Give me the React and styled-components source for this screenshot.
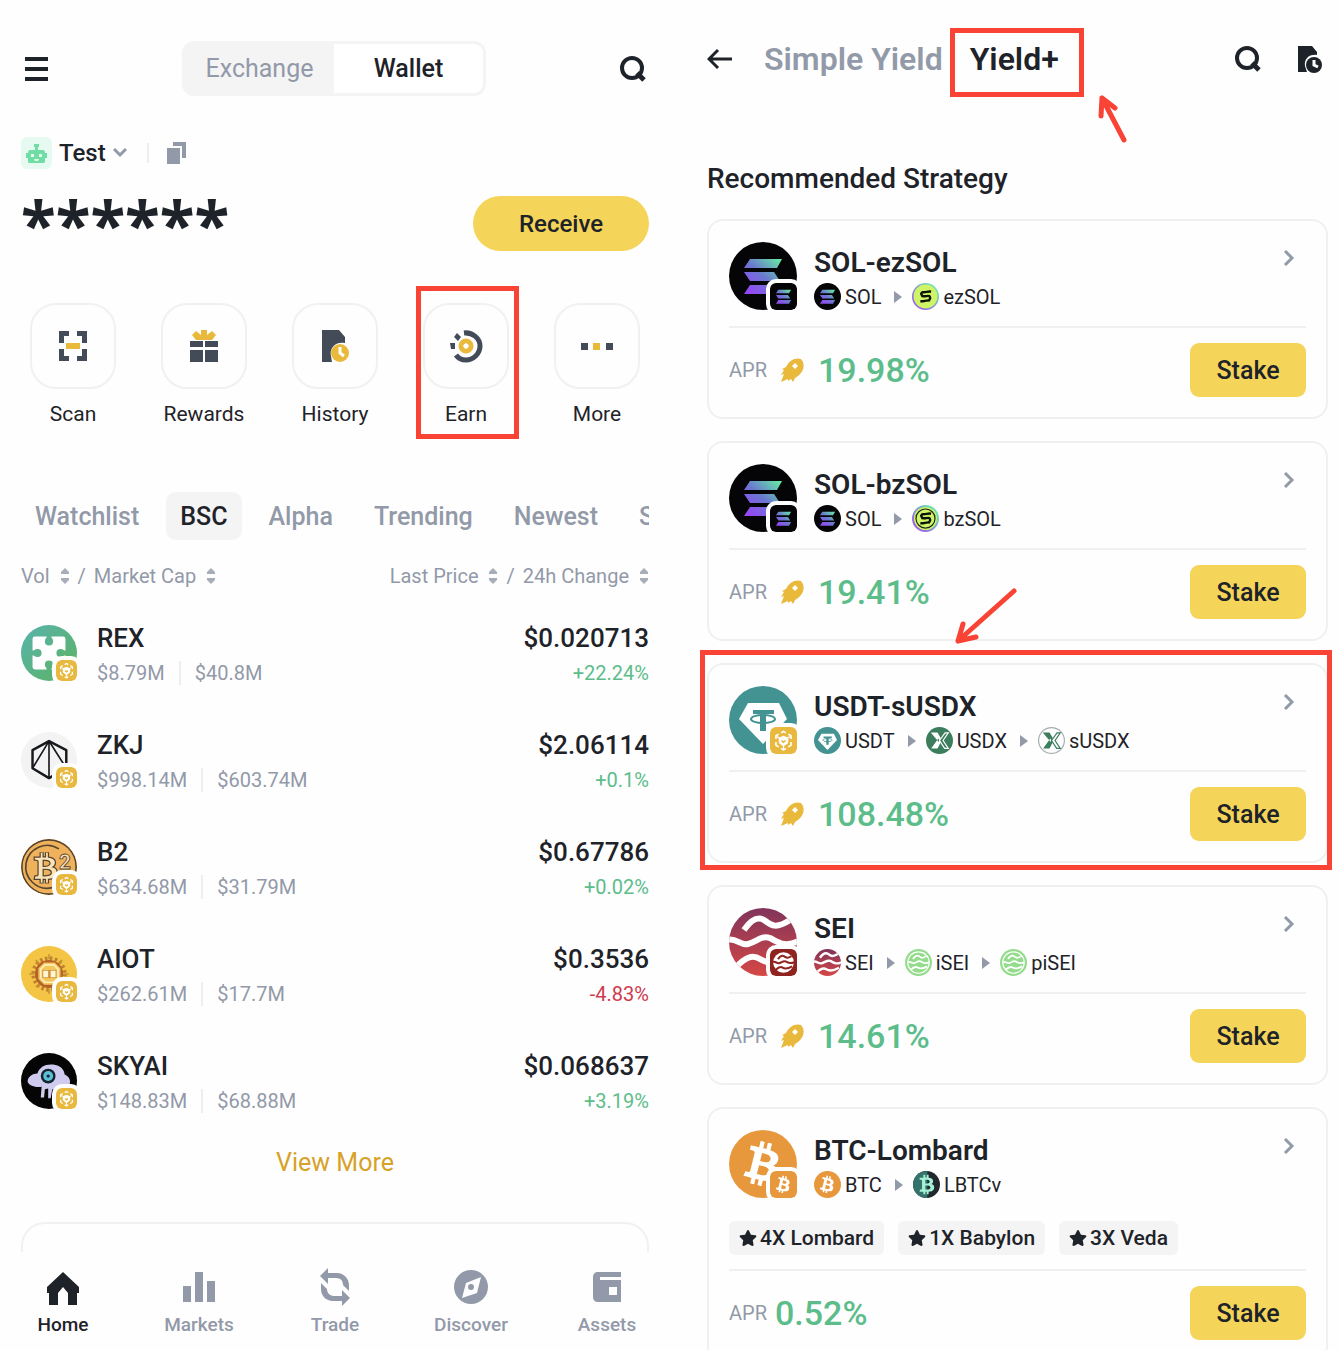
import { useId } from 'react';
import styled, { createGlobalStyle, css } from 'styled-components';
import { FaBtc, FaStar } from 'react-icons/fa';

const GlobalStyle = createGlobalStyle`
  * {
    box-sizing: border-box;
  }

  body {
    margin: 0;
    background: #fefefe;
    color: #1e2329;
    font-family: Roboto, 'Liberation Sans', sans-serif;
  }

  button {
    padding: 0;
    border: 0;
    background: none;
    color: inherit;
    font: inherit;
    cursor: pointer;
  }

  a {
    color: inherit;
    text-decoration: none;
  }

  h1, h2, h3, p, ul, ol {
    margin: 0;
    padding: 0;
    list-style: none;
  }

  svg {
    display: block;
    flex-shrink: 0;
  }
`;

const Page = styled.div`
  display: grid;
  grid-template-columns: 1fr 1fr;
  grid-template-rows: minmax(0, 1fr);
  height: 100vh;
  overflow: hidden;
`;

/* wallet side */

const WalletPanel = styled.main`
  display: flex;
  flex-direction: column;
  min-width: 0;
`;

const WalletBody = styled.div`
  display: flex;
  flex: 1;
  flex-direction: column;
  min-height: 0;
  overflow: hidden;
  padding: 41px 21px 0;
`;

const WalletHeader = styled.header`
  display: flex;
  flex-shrink: 0;
  align-items: center;
  justify-content: space-between;
  padding: 0 2px 0 4px;
`;

const Toggle = styled.div`
  display: flex;
  width: 304px;
  height: 55px;
  padding: 3px;
  border-radius: 12px;
  background: #f4f4f4;
`;

const ToggleButton = styled.button`
  flex: 1;
  border-radius: 0 9px 9px 0;
  background: ${({ $active }) => ($active ? '#fff' : 'transparent')};
  color: ${({ $active }) => ($active ? '#1e2329' : '#9299a8')};
  font-size: 25px;
  font-weight: ${({ $active }) => ($active ? 500 : 400)};
`;

const Account = styled.div`
  display: flex;
  flex-shrink: 0;
  align-items: center;
  height: 32px;
  margin-top: 41px;
`;

const AccountButton = styled.button`
  display: flex;
  align-items: center;
  gap: 7px;
  font-size: 24px;
  font-weight: 500;
`;

const AccountDivider = styled.span`
  width: 2px;
  height: 20px;
  margin: 0 18px 0 20px;
  background: #eceef0;
`;

const BalanceRow = styled.div`
  display: flex;
  flex-shrink: 0;
  align-items: center;
  justify-content: space-between;
  height: 55px;
  margin-top: 27px;
`;

const Balance = styled.p`
  height: 55px;
  font-family: 'Noto Sans', sans-serif;
  font-size: 64px;
  font-weight: 700;
  line-height: 56px;
`;

const ReceiveButton = styled.button`
  width: 176px;
  height: 55px;
  border-radius: 28px;
  background: #f4d55a;
  font-size: 24px;
  font-weight: 500;
`;

const Actions = styled.nav`
  display: flex;
  flex-shrink: 0;
  justify-content: space-between;
  margin-top: 52px;
  padding: 0 9px;
`;

const Action = styled.a`
  position: relative;
  display: flex;
  flex-direction: column;
  align-items: center;
  gap: 11px;
  width: 86px;
  font-size: 21px;
  line-height: 28px;
`;

const ActionTile = styled.span`
  display: flex;
  align-items: center;
  justify-content: center;
  width: 86px;
  height: 86px;
  border: 2px solid #f0f1f1;
  border-radius: 26px;
`;

const Highlight = styled.span`
  position: absolute;
  border: 5px solid #f84335;
  pointer-events: none;
  ${({ $around }) =>
    ({
      action: css`inset: -17px -10px -11px -7px;`,
      tab: css`inset: -12px -25px -19px -20px;`,
      card: css`inset: -15px -6px -9px -9px;`,
    })[$around]}
`;

const Tabs = styled.div`
  display: flex;
  flex-shrink: 0;
  gap: 13px;
  margin-top: 64px;
  overflow: hidden;
`;

const Tab = styled.button`
  flex-shrink: 0;
  height: 48px;
  padding: 0 14px;
  border-radius: 10px;
  background: ${({ $active }) => ($active ? '#f4f4f4' : 'transparent')};
  color: ${({ $active }) => ($active ? '#1e2329' : '#9299a8')};
  font-size: 25px;
  font-weight: 500;
`;

const Market = styled.table`
  flex-shrink: 0;
  width: 100%;
  margin-top: 22px;
  border-collapse: collapse;

  th,
  td {
    padding: 0;
    text-align: left;
  }

  th {
    padding-bottom: 9px;
  }

  th:last-child,
  td:last-child {
    text-align: right;
  }
`;

const SortGroup = styled.span`
  display: inline-flex;
  align-items: center;
  gap: 8px;
  height: 28px;
  color: #9299a8;
  font-size: 20px;
  font-weight: 400;
`;

const SortButton = styled.button`
  display: flex;
  align-items: center;
  gap: 10px;
`;

const MarketRow = styled.tr`
  height: 107px;
`;

const TokenCell = styled.div`
  display: flex;
  align-items: center;
  gap: 20px;
`;

const TokenInfo = styled.div`
  padding-top: 6px;
`;

const TokenName = styled.div`
  font-size: 26px;
  font-weight: 500;
  line-height: 34px;
`;

const TokenStats = styled.div`
  display: flex;
  align-items: center;
  height: 36px;
  color: #9299a8;
  font-size: 20px;

  span + span {
    margin-left: 14px;
    padding-left: 14px;
    border-left: 2px solid #eceef0;
  }
`;

const Change = styled.div`
  color: ${({ $down }) => ($down ? '#cf3a4e' : '#5cbd8b')};
  font-size: 20px;
  line-height: 36px;
`;

const ViewMore = styled.a`
  align-self: center;
  margin-top: 13px;
  color: #d6a228;
  font-size: 25px;
  line-height: 32px;
`;

const NextPanel = styled.section`
  flex: 1;
  margin-top: 43px;
  border: 2px solid #f0f1f1;
  border-bottom: 0;
  border-radius: 24px 24px 0 0;
`;

const BottomNav = styled.nav`
  display: flex;
  flex-shrink: 0;
  justify-content: space-between;
  height: 98px;
  padding: 16px 18px 0;
`;

const NavLink = styled.a`
  display: flex;
  flex-direction: column;
  align-items: center;
  gap: 7px;
  width: 90px;
  color: ${({ $active }) => ($active ? '#1e2329' : '#9299a8')};
  font-size: 19px;
  font-weight: 500;
  line-height: 24px;
`;

/* yield side */

const YieldPanel = styled.section`
  min-width: 0;
  padding: 31px 12px 0 37px;
`;

const YieldHeader = styled.header`
  display: flex;
  align-items: center;
  height: 56px;
`;

const YieldTabs = styled.div`
  display: flex;
  flex: 1;
  gap: 27px;
  margin-left: 31px;
`;

const YieldTab = styled.button`
  position: relative;
  color: ${({ $active }) => ($active ? '#1e2329' : '#9299a8')};
  font-size: 32px;
  font-weight: 600;
  line-height: 38px;
`;

const HeaderTools = styled.div`
  display: flex;
  gap: 34px;
  padding-right: 6px;
`;

const TabArrow = styled.svg`
  position: absolute;
  top: 51px;
  right: -70px;
`;

const CardArrow = styled.svg`
  position: absolute;
  top: -80px;
  left: 242px;
`;

const SectionTitle = styled.h2`
  margin: 75px 0 24px;
  font-size: 28px;
  font-weight: 500;
  line-height: 33px;
`;

const Cards = styled.div`
  display: flex;
  flex-direction: column;
  gap: 22px;
`;

const Card = styled.article`
  position: relative;
  padding: 21px 20px 20px;
  border: 2px solid #eff1f1;
  border-radius: 16px;
`;

const CardTop = styled.a`
  display: flex;
  gap: 17px;
`;

const CardText = styled.div`
  flex: 1;
`;

const CardTitle = styled.h3`
  height: 41px;
  font-size: 28px;
  font-weight: 600;
  line-height: 41px;
`;

const Route = styled.ol`
  display: flex;
  align-items: center;
  height: 27px;
  font-size: 20px;
`;

const RouteStep = styled.li`
  display: flex;
  align-items: center;
  gap: 4px;

  & + &::before {
    content: '';
    width: 0;
    margin: 0 6px 0 13px;
    border: solid transparent;
    border-width: 6px 0 6px 8px;
    border-left-color: #9299a8;
  }
`;

const Chips = styled.ul`
  display: flex;
  gap: 14px;
  margin-top: 23px;
`;

const Chip = styled.li`
  display: flex;
  align-items: center;
  gap: 3px;
  height: 34px;
  padding: 0 10px;
  border-radius: 6px;
  background: #f4f4f4;
  font-size: 21px;
  font-weight: 500;
`;

const CardBottom = styled.div`
  display: flex;
  align-items: center;
  margin-top: ${({ $close }) => ($close ? 14 : 16)}px;
  padding-top: 15px;
  border-top: 2px solid #eff1f1;
`;

const AprLabel = styled.span`
  color: #9299a8;
  font-size: 20px;
`;

const AprValue = styled.span`
  flex: 1;
  margin-left: ${({ $boosted }) => ($boosted ? 14 : 8)}px;
  color: #5cbd8b;
  font-size: 34px;
  font-weight: 500;
`;

const Boost = styled.span`
  margin-left: 13px;
`;

const StakeButton = styled.button`
  width: 116px;
  height: 54px;
  border-radius: 9px;
  background: #f4d55a;
  font-size: 25px;
  font-weight: 500;
`;

const ChevronBox = styled.span`
  padding: 8px 11px 0 0;
`;

/* token logos */

const LogoBox = styled.span`
  position: relative;
  flex-shrink: 0;
  width: ${({ $size }) => $size}px;
  height: ${({ $size }) => $size}px;
`;

const Disc = styled.span`
  display: flex;
  align-items: center;
  justify-content: center;
  width: ${({ $size }) => $size}px;
  height: ${({ $size }) => $size}px;
  overflow: hidden;
  border-radius: 50%;
`;

const ChainBadge = styled.span`
  position: absolute;
  right: -4px;
  bottom: -4px;
  overflow: hidden;
  border: 4px solid #fefefe;
  border-radius: 10px;
  background: #fefefe;

  svg {
    border-radius: 5px;
  }
`;

function SolArt() {
  const id = useId();
  return (
    <>
      <linearGradient id={id} x1="16" y1="54" x2="52" y2="14" gradientUnits="userSpaceOnUse">
        <stop offset="0.1" stopColor="#9447f5" />
        <stop offset="0.5" stopColor="#6a78d0" />
        <stop offset="0.95" stopColor="#66eba2" />
      </linearGradient>
      <rect width="68" height="68" fill="#050507" />
      <path
        fill={`url(#${id})`}
        d="M21 17h32l-5 9H15zM15 30h30l6 9H21zM21 43h32l-5 9H15z"
      />
    </>
  );
}

function EzSolArt({ ring }) {
  const id = useId();
  return (
    <>
      <linearGradient id={id} x1="0" y1="1" x2="1" y2="0">
        <stop offset="0.2" stopColor="#9a62ea" />
        <stop offset="0.8" stopColor="#6fdcb8" />
      </linearGradient>
      <rect width="68" height="68" fill={`url(#${id})`} />
      <circle cx="34" cy="34" r={ring ? 29 : 30} fill="#cdf565" />
      {ring && <circle cx="34" cy="34" r="24" fill="none" stroke="#20251c" strokeWidth="3" />}
      <path
        fill="none"
        stroke="#10130c"
        strokeWidth="6"
        strokeLinejoin="round"
        d="M48 22c-8-2-12 2-22 1l-3 4 3 6c8 2 12-2 18 0l2 5-3 6c-8-1-12 3-22 2"
      />
    </>
  );
}

function UsdtArt() {
  return (
    <>
      <rect width="68" height="68" fill="#429392" />
      <path fill="#fff" d="M19 17h31l8 16-24 25L10 33z" />
      <path fill="#429392" d="M24 24h21v4h-8v17h-6V28h-7z" />
      <ellipse cx="34" cy="33" rx="12" ry="4" fill="none" stroke="#429392" strokeWidth="2" />
    </>
  );
}

function UsdxArt({ light }) {
  const ink = light ? '#3b7d5c' : '#fff';
  return (
    <>
      <rect width="68" height="68" fill={light ? '#a5adb0' : '#3b7d5c'} />
      {light && <circle cx="34" cy="34" r="31" fill="#fefefe" />}
      <path fill={ink} d="M12 14h17l8 14-5 10zM13 54h16l8-15-6-10z" />
      <path fill="none" stroke={ink} strokeWidth="3" d="M34 34l14-19h8L43 34l13 20h-9z" />
    </>
  );
}

const waves = (
  <>
    <path d="M15 22C22 12 28 8 35 12c8 6 12 9 26 0" />
    <path d="M-2 32c9-3 13 6 21 4 9-2 13-9 22-6 8 4 14 10 29 3" />
    <path d="M7 59c9-9 16-13 24-8 9 6 18 4 32-4" />
  </>
);

function SeiArt() {
  const id = useId();
  return (
    <>
      <linearGradient id={id} x1="0" y1="0" x2="0" y2="1">
        <stop offset="0" stopColor="#81345c" />
        <stop offset="1" stopColor="#d54845" />
      </linearGradient>
      <rect width="68" height="68" fill={`url(#${id})`} />
      <g fill="none" stroke="#fff" strokeWidth="6">{waves}</g>
    </>
  );
}

function SeiBadgeArt() {
  return (
    <>
      <rect width="68" height="68" fill="#8f2320" />
      <circle cx="34" cy="34" r="26" fill="#fff" />
      <g fill="none" stroke="#8f2320" strokeWidth="7" transform="translate(9 9) scale(0.74)">{waves}</g>
    </>
  );
}

function ISeiArt() {
  return (
    <>
      <rect width="68" height="68" fill="#93dc8c" />
      <circle cx="34" cy="34" r="27" fill="none" stroke="#fff" strokeWidth="3" />
      <g fill="none" stroke="#fff" strokeWidth="6" transform="translate(9 9) scale(0.74)">{waves}</g>
    </>
  );
}

function BtcArt() {
  return (
    <>
      <rect width="68" height="68" fill="#e8983c" />
      <g transform="rotate(14 34 34)">
        <FaBtc x="12" y="12" size="44" color="#fff" />
      </g>
    </>
  );
}

function LbtcArt() {
  return (
    <>
      <rect width="68" height="68" fill="#20282d" />
      <path fill="#34736b" d="M0 0h36v68H0z" />
      <FaBtc x="10" y="9" size="50" color="#a5f0d6" />
    </>
  );
}

function BnbArt() {
  return (
    <>
      <rect width="68" height="68" fill="#e8b93e" />
      <g fill="none" stroke="#fff" strokeWidth="4" strokeLinejoin="round">
        <path d="M28 15l6-4 6 4M46 18l7 4v8M53 38v8l-7 4M40 54l-6 4-6-4M22 50l-7-4v-8M15 30v-8l7-4" />
        <path d="M17 24l9 5M51 24l-9 5M34 47v9" strokeWidth="3" />
      </g>
      <path fill="#fff" d="M22 27l12-5 12 5v13l-12 9-12-9z" />
      <path fill="#e8b93e" d="M34 35l-5-3v5l5 4 5-4v-5z" />
    </>
  );
}

function RexArt() {
  const id = useId();
  return (
    <>
      <linearGradient id={id} x1="0" y1="0" x2="68" y2="68" gradientUnits="userSpaceOnUse">
        <stop offset="0.1" stopColor="#58b3a5" />
        <stop offset="0.7" stopColor="#5bb377" />
      </linearGradient>
      <rect width="68" height="68" fill={`url(#${id})`} />
      <rect x="14" y="14" width="40" height="40" rx="3" fill="#fff" />
      <g fill={`url(#${id})`}>
        <circle cx="34" cy="20" r="5" />
        <circle cx="20" cy="34" r="5" />
        <circle cx="48" cy="34" r="5" />
        <circle cx="34" cy="48" r="5" />
        <path d="M31 12h6v6h-6zM31 50h6v6h-6zM12 31h6v6h-6zM50 31h6v6h-6z" />
      </g>
    </>
  );
}

function ZkjArt() {
  return (
    <>
      <rect width="68" height="68" fill="#f3f3f3" />
      <g fill="none" stroke="#16191d" strokeLinejoin="round">
        <path strokeWidth="3" d="M34 11L14 22v22l20 12 21-12V22z" />
        <path strokeWidth="2" d="M34 11L14 44M34 11v45M34 11l21 33" />
      </g>
    </>
  );
}

function B2Art() {
  return (
    <>
      <rect width="68" height="68" fill="#efb15c" />
      <circle cx="34" cy="34" r="33" fill="none" stroke="#54452f" strokeWidth="2" />
      <path fill="none" stroke="#54452f" strokeWidth="2" d="M46 12A26 26 0 1 0 38 59" />
      <FaBtc x="11" y="16" size="38" color="#fbe3b8" stroke="#54452f" strokeWidth="20" />
      <text
        x="46"
        y="36"
        fill="#fbe3b8"
        stroke="#54452f"
        strokeWidth="1"
        fontFamily="Roboto, sans-serif"
        fontSize="25"
        fontWeight="700"
      >
        2
      </text>
    </>
  );
}

function AiotArt() {
  return (
    <>
      <rect width="68" height="68" fill="#f4c544" />
      <circle cx="34" cy="34" r="19" fill="none" stroke="#c08032" strokeWidth="5" strokeDasharray="3 3" />
      <circle cx="34" cy="34" r="17" fill="#b4612a" />
      <path fill="#f3c65a" d="M28 20h13l7 7v13l-7 7H28l-7-7V27z" />
      <path fill="none" stroke="#fff0bd" strokeWidth="2" d="M29 23h11l5 5v11l-5 5H29l-5-5V28z" />
      <path fill="#d08f3c" d="M26 29h17v10H26z" />
      <path fill="#fff6d2" d="M27 30h6v8h-6zM36 30h6v8h-6z" />
      <path
        stroke="#c99335"
        strokeWidth="2"
        d="M34 10v6M34 52v6M10 34h6M52 34h6M18 17l4 4M50 17l-4 4M18 50l4-4"
      />
    </>
  );
}

function SkyArt() {
  return (
    <>
      <rect width="68" height="68" fill="#050505" />
      <path
        fill="#cfcbee"
        d="M20 25c2-8 10-12 19-11 8 1 13 5 14 12 5 2 8 7 6 12-3 4-10 3-14 4l-1 11h-3l-1-9h-2l-2 11h-3V43l-4 1-1 10h-4l1-13c-5 1-15 0-17-6 0-6 6-10 12-10z"
      />
      <circle cx="33" cy="28" r="9" fill="#15242e" />
      <circle cx="33" cy="28" r="6" fill="#5bbfd8" />
      <circle cx="33" cy="28" r="2" fill="#15242e" />
    </>
  );
}

const art = {
  SOL: <SolArt />,
  ezSOL: <EzSolArt />,
  bzSOL: <EzSolArt ring />,
  USDT: <UsdtArt />,
  USDX: <UsdxArt />,
  sUSDX: <UsdxArt light />,
  SEI: <SeiArt />,
  seiChain: <SeiBadgeArt />,
  iSEI: <ISeiArt />,
  piSEI: <ISeiArt />,
  BTC: <BtcArt />,
  LBTCv: <LbtcArt />,
  BNB: <BnbArt />,
  REX: <RexArt />,
  ZKJ: <ZkjArt />,
  B2: <B2Art />,
  AIOT: <AiotArt />,
  SKYAI: <SkyArt />,
};

function Art({ name, size }) {
  return (
    <svg width={size} height={size} viewBox="0 0 68 68" aria-hidden="true">
      {art[name]}
    </svg>
  );
}

function TokenLogo({ name, chain, size, badge }) {
  return (
    <LogoBox $size={size}>
      <Disc $size={size}>
        <Art name={name} size={size} />
      </Disc>
      <ChainBadge>
        <Art name={chain} size={badge} />
      </ChainBadge>
    </LogoBox>
  );
}

/* line icons */

const MenuIcon = () => (
  <svg width="24" height="24" viewBox="0 0 24 24" fill="#1e2329">
    <path d="M0 0h23v4H0zM0 10h23v4H0zM0 20h23v4H0z" />
  </svg>
);

const SearchIcon = () => (
  <svg width="28" height="28" viewBox="0 0 28 28" fill="none" stroke="#1e2329" strokeWidth="4">
    <circle cx="13" cy="13" r="10" />
    <path d="M18 18l7 7" strokeWidth="5" />
  </svg>
);

const RobotIcon = () => (
  <svg width="31" height="32" viewBox="0 0 31 32">
    <rect width="31" height="32" rx="6" fill="#e6faf1" />
    <path
      fill="#6fdda4"
      d="M13 7h5v3h-1v3h5c1 0 2 1 2 3h2v5h-2v4l-1 1H8l-1-1v-4H5v-5h2c0-2 1-3 2-3h5v-3h-1z"
    />
    <path fill="#e6faf1" d="M10 17h3v3h-3zM18 17h3v3h-3zM13 22h5l-1 2h-3z" />
  </svg>
);

const ChevronDown = () => (
  <svg width="14" height="10" viewBox="0 0 14 10" fill="none" stroke="#9299a8" strokeWidth="3">
    <path d="M1 1l6 6 6-6" />
  </svg>
);

const ChevronRight = () => (
  <svg width="12" height="16" viewBox="0 0 12 16" fill="none" stroke="#9299a8" strokeWidth="3">
    <path d="M2 1l7 7-7 7" />
  </svg>
);

const CopyIcon = () => (
  <svg width="20" height="22" viewBox="0 0 20 22" fill="#9299a8">
    <path d="M0 6h13v16H0zM6 0h13v16h-4V4H6z" />
  </svg>
);

const ScanIcon = () => (
  <svg width="34" height="34" viewBox="0 0 34 34">
    <path
      fill="#434b59"
      d="M3 2h10v5H8v7H3zM21 2h10v12h-5V7h-5zM3 20h5v7h5v5H3zM26 20h5v12H21v-5h5z"
    />
    <path fill="#e9b93c" d="M10 14h14v6H10z" />
  </svg>
);

const GiftIcon = () => (
  <svg width="34" height="34" viewBox="0 0 34 34">
    <path fill="#434b59" d="M3 12h13v6H3zM18 12h13v6H18zM3 21h13v12H3zM18 21h13v12H18z" />
    <path fill="#e9b93c" d="M5 6l4-4 5 4V1h6v5l5-4 4 4-4 5H9z" />
  </svg>
);

const HistoryIcon = () => (
  <svg width="34" height="34" viewBox="0 0 34 34">
    <path fill="#434b59" d="M4 1h17l6 7v6c-9-2-16 5-14 13l1 6H4z" />
    <circle cx="22" cy="24" r="9" fill="#e9b93c" />
    <path fill="none" stroke="#fff" strokeWidth="3" d="M22 18v6l4 3" />
  </svg>
);

const EarnIcon = () => (
  <svg width="34" height="34" viewBox="0 0 34 34">
    <path
      fill="none"
      stroke="#434b59"
      strokeWidth="5"
      d="M15 4c8-1 16 5 16 13S24 31 17 31c-4 0-8-2-10-5"
    />
    <circle cx="17" cy="17" r="5" fill="none" stroke="#e9b93c" strokeWidth="5" />
    <path fill="#fff" d="M17 14l3 3-3 3-3-3z" />
    <path fill="#434b59" d="M8 4l4 4-3 4-4-4zM1 14h5v6H2z" />
  </svg>
);

const MoreIcon = () => (
  <svg width="34" height="34" viewBox="0 0 34 34">
    <path fill="#434b59" d="M1 14h7v7H1zM26 14h7v7h-7z" />
    <path fill="#e9b93c" d="M13 14h7v7h-7z" />
  </svg>
);

const SortIcon = () => (
  <svg width="10" height="16" viewBox="0 0 10 16" fill="#a8aeb8">
    <path d="M5 0l4 4v2H1V4zM1 10h8v2l-4 4-4-4z" />
  </svg>
);

const HomeIcon = () => (
  <svg width="36" height="38" viewBox="0 0 36 38" fill="currentColor">
    <path d="M18 4l16 15v6h-2v12h-9V25l-5-6-5 6v12H4V25H2v-6z" />
  </svg>
);

const MarketsIcon = () => (
  <svg width="36" height="38" viewBox="0 0 36 38" fill="currentColor">
    <path d="M2 18h8v16H2zM14 4h8v30h-8zM26 13h8v21h-8z" />
  </svg>
);

const TradeIcon = () => (
  <svg width="36" height="38" viewBox="0 0 36 38" fill="currentColor">
    <path d="M3 8l8-8v5h9c7 0 12 6 12 12v6l-6-6c0-4-2-7-7-7h-8v6zM4 15l6 6c0 4 3 7 7 7h8v-6l8 8-8 8v-5h-9C9 33 4 28 4 21z" />
  </svg>
);

const DiscoverIcon = () => (
  <svg width="36" height="38" viewBox="0 0 36 38" fill="currentColor">
    <circle cx="18" cy="19" r="17" />
    <path fill="#fefefe" d="M28 9l-4 16-15 5 4-15z" />
    <circle cx="18" cy="19" r="3" />
  </svg>
);

const AssetsIcon = () => (
  <svg width="36" height="38" viewBox="0 0 36 38" fill="currentColor">
    <path d="M9 4h23v30H9c-3 0-5-2-5-5V9c0-3 2-5 5-5z" />
    <path fill="#fefefe" d="M11 9h21v3H11zM20 19h8v8h-8z" />
  </svg>
);

const BackIcon = () => (
  <svg width="26" height="22" viewBox="0 0 26 22" fill="none" stroke="#1e2329" strokeWidth="3">
    <path d="M25 11H2M11 2l-9 9 9 9" />
  </svg>
);

const OrdersIcon = () => (
  <svg width="26" height="28" viewBox="0 0 26 28">
    <path fill="#1e2329" d="M2 1h14l5 6v3c-8-1-13 4-12 11l2 6H2z" />
    <circle cx="18" cy="20" r="8" fill="#1e2329" />
    <path fill="none" stroke="#fff" strokeWidth="3" d="M18 15v5l4 2" />
  </svg>
);

const RocketIcon = () => (
  <svg width="24" height="24" viewBox="0 0 24 24">
    <path
      fill="#e9b93c"
      d="M23 4c2 6-1 11-5 14l-3 2-2 4-2-3-3 2v-2l-7 3 3-8-3 1 3-5-2-1 4-2C9 2 16-1 21 1z"
    />
    <path fill="#fff" d="M15 5l3 3-3 3-3-3z" />
  </svg>
);

const arrowStroke = {
  fill: 'none',
  stroke: '#f84335',
  strokeWidth: 5,
  strokeLinecap: 'round',
  strokeLinejoin: 'round',
  'aria-hidden': true,
};

const actions = [
  { label: 'Scan', icon: <ScanIcon /> },
  { label: 'Rewards', icon: <GiftIcon /> },
  { label: 'History', icon: <HistoryIcon /> },
  { label: 'Earn', icon: <EarnIcon />, highlighted: true },
  { label: 'More', icon: <MoreIcon /> },
];

const tabs = ['Watchlist', 'BSC', 'Alpha', 'Trending', 'Newest', 'S'];

const tokens = [
  { name: 'REX', volume: '$8.79M', cap: '$40.8M', price: '$0.020713', change: '+22.24%' },
  { name: 'ZKJ', volume: '$998.14M', cap: '$603.74M', price: '$2.06114', change: '+0.1%' },
  { name: 'B2', volume: '$634.68M', cap: '$31.79M', price: '$0.67786', change: '+0.02%' },
  { name: 'AIOT', volume: '$262.61M', cap: '$17.7M', price: '$0.3536', change: '-4.83%' },
  { name: 'SKYAI', volume: '$148.83M', cap: '$68.88M', price: '$0.068637', change: '+3.19%' },
];

const navItems = [
  { label: 'Home', icon: <HomeIcon /> },
  { label: 'Markets', icon: <MarketsIcon /> },
  { label: 'Trade', icon: <TradeIcon /> },
  { label: 'Discover', icon: <DiscoverIcon /> },
  { label: 'Assets', icon: <AssetsIcon /> },
];

const strategies = [
  { title: 'SOL-ezSOL', logo: 'SOL', chain: 'SOL', route: ['SOL', 'ezSOL'], apr: '19.98%', boosted: true },
  { title: 'SOL-bzSOL', logo: 'SOL', chain: 'SOL', route: ['SOL', 'bzSOL'], apr: '19.41%', boosted: true },
  {
    title: 'USDT-sUSDX',
    logo: 'USDT',
    chain: 'BNB',
    route: ['USDT', 'USDX', 'sUSDX'],
    apr: '108.48%',
    boosted: true,
    highlighted: true,
  },
  { title: 'SEI', logo: 'SEI', chain: 'seiChain', route: ['SEI', 'iSEI', 'piSEI'], apr: '14.61%', boosted: true },
  {
    title: 'BTC-Lombard',
    logo: 'BTC',
    chain: 'BTC',
    route: ['BTC', 'LBTCv'],
    perks: ['4X Lombard', '1X Babylon', '3X Veda'],
    apr: '0.52%',
  },
];

function Sort({ children }) {
  return (
    <SortButton>
      {children}
      <SortIcon />
    </SortButton>
  );
}

function MarketTable() {
  return (
    <Market>
      <thead>
        <tr>
          <th>
            <SortGroup>
              <Sort>Vol</Sort>/<Sort>Market Cap</Sort>
            </SortGroup>
          </th>
          <th>
            <SortGroup>
              <Sort>Last Price</Sort>/<Sort>24h Change</Sort>
            </SortGroup>
          </th>
        </tr>
      </thead>
      <tbody>
        {tokens.map((token) => (
          <MarketRow key={token.name}>
            <td>
              <TokenCell>
                <TokenLogo name={token.name} chain="BNB" size={56} badge={21} />
                <TokenInfo>
                  <TokenName>{token.name}</TokenName>
                  <TokenStats>
                    <span>{token.volume}</span>
                    <span>{token.cap}</span>
                  </TokenStats>
                </TokenInfo>
              </TokenCell>
            </td>
            <td>
              <TokenInfo>
                <TokenName>{token.price}</TokenName>
                <Change $down={token.change.startsWith('-')}>{token.change}</Change>
              </TokenInfo>
            </td>
          </MarketRow>
        ))}
      </tbody>
    </Market>
  );
}

function Wallet() {
  return (
    <WalletPanel>
      <WalletBody>
        <WalletHeader>
          <button aria-label="Menu">
            <MenuIcon />
          </button>
          <Toggle>
            <ToggleButton>Exchange</ToggleButton>
            <ToggleButton $active>Wallet</ToggleButton>
          </Toggle>
          <button aria-label="Search">
            <SearchIcon />
          </button>
        </WalletHeader>

        <Account>
          <AccountButton>
            <RobotIcon />
            Test
            <ChevronDown />
          </AccountButton>
          <AccountDivider />
          <button aria-label="Copy address">
            <CopyIcon />
          </button>
        </Account>

        <BalanceRow>
          <Balance>******</Balance>
          <ReceiveButton>Receive</ReceiveButton>
        </BalanceRow>

        <Actions>
          {actions.map(({ label, icon, highlighted }) => (
            <Action key={label} href="#">
              <ActionTile>{icon}</ActionTile>
              {label}
              {highlighted && <Highlight $around="action" />}
            </Action>
          ))}
        </Actions>

        <Tabs>
          {tabs.map((tab) => (
            <Tab key={tab} $active={tab === 'BSC'}>
              {tab}
            </Tab>
          ))}
        </Tabs>

        <MarketTable />
        <ViewMore href="#">View More</ViewMore>
        <NextPanel />
      </WalletBody>

      <BottomNav>
        {navItems.map(({ label, icon }) => (
          <NavLink key={label} href="#" $active={label === 'Home'}>
            {icon}
            {label}
          </NavLink>
        ))}
      </BottomNav>
    </WalletPanel>
  );
}

function StrategyCard({ strategy }) {
  const { title, logo, chain, route, perks, apr, boosted, highlighted } = strategy;

  return (
    <Card>
      <CardTop href="#">
        <TokenLogo name={logo} chain={chain} size={68} badge={27} />
        <CardText>
          <CardTitle>{title}</CardTitle>
          <Route>
            {route.map((step) => (
              <RouteStep key={step}>
                <Disc $size={27}>
                  <Art name={step} size={27} />
                </Disc>
                {step}
              </RouteStep>
            ))}
          </Route>
        </CardText>
        <ChevronBox>
          <ChevronRight />
        </ChevronBox>
      </CardTop>

      {perks && (
        <Chips>
          {perks.map((perk) => (
            <Chip key={perk}>
              <FaStar size={18} />
              {perk}
            </Chip>
          ))}
        </Chips>
      )}

      <CardBottom $close={Boolean(perks)}>
        <AprLabel>APR</AprLabel>
        {boosted && (
          <Boost>
            <RocketIcon />
          </Boost>
        )}
        <AprValue $boosted={boosted}>{apr}</AprValue>
        <StakeButton>Stake</StakeButton>
      </CardBottom>

      {highlighted && (
        <>
          <Highlight $around="card" />
          <CardArrow {...arrowStroke} width="66" height="60" viewBox="0 0 66 60">
            <path d="M63 6L7 56M12 39L7 56l18-4" />
          </CardArrow>
        </>
      )}
    </Card>
  );
}

function Yield() {
  return (
    <YieldPanel>
      <YieldHeader>
        <button aria-label="Back">
          <BackIcon />
        </button>
        <YieldTabs>
          <YieldTab>Simple Yield</YieldTab>
          <YieldTab $active>
            Yield+
            <Highlight $around="tab" />
            <TabArrow {...arrowStroke} width="32" height="52" viewBox="0 0 32 52">
              <path d="M27 49L5 7M4 25L5 7l13 10" />
            </TabArrow>
          </YieldTab>
        </YieldTabs>
        <HeaderTools>
          <button aria-label="Search">
            <SearchIcon />
          </button>
          <button aria-label="Orders">
            <OrdersIcon />
          </button>
        </HeaderTools>
      </YieldHeader>

      <SectionTitle>Recommended Strategy</SectionTitle>
      <Cards>
        {strategies.map((strategy) => (
          <StrategyCard key={strategy.title} strategy={strategy} />
        ))}
      </Cards>
    </YieldPanel>
  );
}

export default function App() {
  return (
    <>
      <GlobalStyle />
      <Page>
        <Wallet />
        <Yield />
      </Page>
    </>
  );
}
